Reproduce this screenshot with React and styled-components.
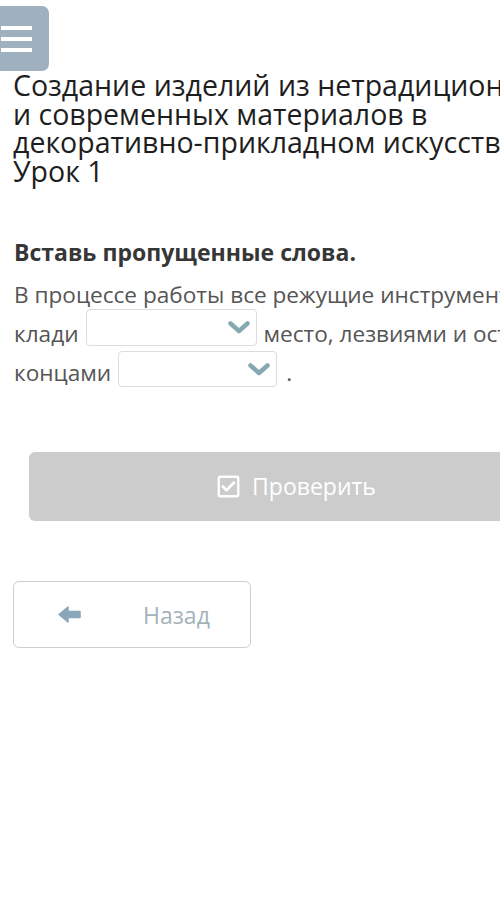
import React from "react";
import styled, { createGlobalStyle } from "styled-components";
import { FaRegCheckSquare } from "react-icons/fa";

const GlobalStyle = createGlobalStyle`
  html, body {
    margin: 0;
    padding: 0;
    background: #ffffff;
    overflow: hidden;
  }
  body {
    font-family: "Open Sans", "Noto Sans", sans-serif;
  }
`;

// page is wider than the viewport, right side gets cut like in the app
const Page = styled.div`
  width: 592px;
  padding-top: 6px;
`;

const MenuButton = styled.button`
  display: flex;
  flex-direction: column;
  justify-content: center;
  gap: 7px;
  width: 49px;
  height: 65px;
  padding: 0 0 0 1px;
  border: none;
  border-radius: 0 7px 7px 0;
  background: #9fb1be;
  cursor: pointer;
`;

const MenuBar = styled.span`
  display: block;
  width: 31px;
  height: 4px;
  background: #ffffff;
`;

const Title = styled.h1`
  margin: 0;
  padding: 0 0 0 13px;
  font-size: 28.5px;
  font-weight: 400;
  line-height: 28.6px;
  color: #1e1e1e;
  white-space: nowrap;
`;

const Task = styled.section`
  margin-top: 54px;
  padding-left: 14px;
`;

const TaskHeading = styled.h2`
  margin: 0;
  font-size: 23px;
  font-weight: 700;
  line-height: 27px;
  color: #363636;
  white-space: nowrap;
`;

const TaskText = styled.p`
  margin: 9px 0 0;
  font-size: 22.6px;
  line-height: 39px;
  color: #555555;
  white-space: nowrap;
`;

// inline-block + overflow hidden so the baseline is the bottom edge
const Select = styled.span`
  display: inline-block;
  overflow: hidden;
  box-sizing: border-box;
  width: ${(p) => p.$w}px;
  height: ${(p) => p.$h}px;
  margin: -6px ${(p) => p.$mr}px 0 7px;
  vertical-align: ${(p) => p.$va}px;
  border: 1px solid #dcdcdc;
  border-radius: 4px;
  background: #ffffff;
`;

const SelectInner = styled.span`
  display: flex;
  align-items: center;
  justify-content: flex-end;
  height: 100%;
  padding-right: 6px;
`;

const Chevron = () => (
  <svg width="22" height="13" viewBox="0 0 22 13">
    <polyline
      points="2.5,2.5 11,10 19.5,2.5"
      fill="none"
      stroke="#86a9b1"
      strokeWidth="4.5"
      strokeLinecap="round"
      strokeLinejoin="round"
    />
  </svg>
);

const CheckButton = styled.button`
  display: flex;
  align-items: center;
  justify-content: center;
  gap: 11px;
  width: 534px;
  height: 69px;
  margin: 60px 0 0 29px;
  padding: 0 0 2px;
  border: none;
  border-radius: 6px;
  background: #cccccc;
  color: #ffffff;
  font-family: inherit;
  font-size: 23px;
  svg {
    font-size: 25px;
    margin-top: 2px;
  }
`;

const BackButton = styled.button`
  display: flex;
  align-items: center;
  gap: 62px;
  box-sizing: border-box;
  width: 238px;
  height: 67px;
  margin: 60px 0 0 13px;
  padding: 0 0 0 44px;
  border: 1px solid #c9cfd2;
  border-radius: 6px;
  background: #ffffff;
  color: #a3b2b9;
  font-family: inherit;
  font-size: 23px;
`;

const ArrowLeft = () => (
  <svg width="23" height="17" viewBox="0 0 23 17">
    <path
      d="M1 8.5 L10 1 L10 5.5 L22 5.5 L22 11.5 L10 11.5 L10 16 Z"
      fill="#8aa6b9"
      stroke="#8aa6b9"
      strokeWidth="1.5"
      strokeLinejoin="round"
    />
  </svg>
);

export default function App() {
  return (
    <>
      <GlobalStyle />
      <Page>
        <MenuButton aria-label="menu">
          <MenuBar />
          <MenuBar />
          <MenuBar />
        </MenuButton>
        <Title>
          Создание изделий из нетрадиционных
          <br />
          и современных материалов в
          <br />
          декоративно-прикладном искусстве.
          <br />
          Урок 1
        </Title>
        <Task>
          <TaskHeading>Вставь пропущенные слова.</TaskHeading>
          <TaskText>
            В процессе работы все режущие инструменты
            <br />
            клади
            <Select $w={171} $h={37} $mr={7} $va={-4}>
              <SelectInner>
                <Chevron />
              </SelectInner>
            </Select>
            место, лезвиями и острыми
            <br />
            концами
            <Select $w={159} $h={36} $mr={9} $va={-6}>
              <SelectInner>
                <Chevron />
              </SelectInner>
            </Select>
            .
          </TaskText>
        </Task>
        <CheckButton>
          <FaRegCheckSquare />
          Проверить
        </CheckButton>
        <BackButton>
          <ArrowLeft />
          Назад
        </BackButton>
      </Page>
    </>
  );
}
